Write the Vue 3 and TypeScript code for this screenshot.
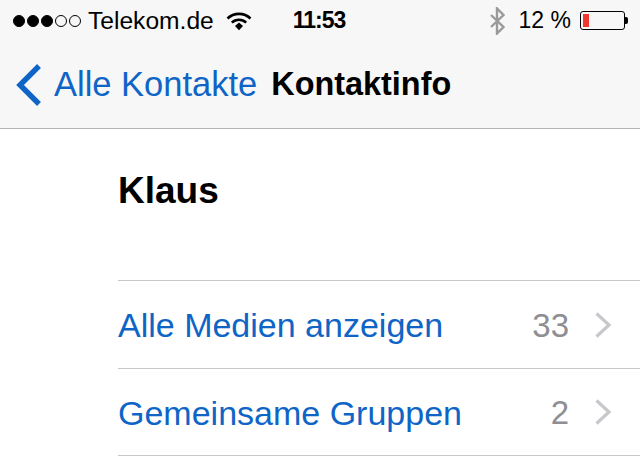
<script setup lang="ts">
interface InfoRow {
  label: string
  count: number
}

const rows: InfoRow[] = [
  { label: 'Alle Medien anzeigen', count: 33 },
  { label: 'Gemeinsame Gruppen', count: 2 }
]
</script>

<template>
  <div class="screen">
    <header class="top">
      <div class="status">
        <div class="status-left">
          <span class="signal">
            <i class="dot on"></i><i class="dot on"></i><i class="dot on"></i><i class="dot"></i><i class="dot"></i>
          </span>
          <span class="carrier">Telekom.de</span>
          <svg class="wifi" width="26" height="20" viewBox="0 0 26 20">
            <path d="M1.5 7.5a16.5 16.5 0 0 1 23 0" fill="none" stroke="#000" stroke-width="2.6" />
            <path d="M5.8 11.6a10.4 10.4 0 0 1 14.4 0" fill="none" stroke="#000" stroke-width="2.6" />
            <path d="M9 15l4-3.4 4 3.4-4 4.2z" fill="#000" />
          </svg>
        </div>
        <span class="time">11:53</span>
        <div class="status-right">
          <svg class="bt" width="18" height="28" viewBox="0 0 18 28">
            <path d="M3 8l12.5 12-6.500 6.500V1.500L15.500 8 3 20" fill="none" stroke="#9a9a9a" stroke-width="2.4" />
          </svg>
          <span class="percent">12 %</span>
          <div class="battery"><div class="charge"></div></div>
          <div class="battery-tip"></div>
        </div>
      </div>
      <nav class="nav">
        <svg class="back" width="28" height="44" viewBox="0 0 28 44">
          <path d="M24 3L5 22l19 19" fill="none" stroke="#0f65c6" stroke-width="5.4" />
        </svg>
        <span class="back-label">Alle Kontakte</span>
        <span class="title">Kontaktinfo</span>
      </nav>
    </header>
    <main class="content">
      <h1 class="name">Klaus</h1>
      <ul class="rows">
        <li v-for="row in rows" :key="row.label" class="row">
          <span class="row-label">{{ row.label }}</span>
          <span class="row-count">{{ row.count }}</span>
          <svg class="chevron" width="18" height="28" viewBox="0 0 18 28">
            <path d="M2.5 2.5L15 14 2.5 25.5" fill="none" stroke="#c7c7cc" stroke-width="3.2" />
          </svg>
        </li>
      </ul>
    </main>
  </div>
</template>

<style scoped>
.screen {
  width: 640px;
  height: 463px;
  overflow: hidden;
  background: #fff;
  font-family: "Liberation Sans", Arial, sans-serif;
  color: #000;
}

.top {
  height: 129px;
  box-sizing: border-box;
  background: #f7f7f7;
  border-bottom: 1px solid #b5b5b5;
}

.status {
  height: 41px;
  display: flex;
  align-items: center;
  font-size: 24.6px;
}

.status-left {
  display: flex;
  align-items: center;
  padding-left: 13px;
}

.signal {
  display: flex;
  gap: 2px;
}

.dot {
  width: 12px;
  height: 12px;
  box-sizing: border-box;
  border-radius: 50%;
  border: 1px solid #000;
}

.dot.on {
  background: #000;
}

.carrier {
  margin-left: 7px;
}

.wifi {
  margin-left: 12px;
}

.time {
  margin-left: 41px;
  font-size: 23px;
  font-weight: 700;
  letter-spacing: -1px;
}

.status-right {
  margin-left: auto;
  display: flex;
  align-items: center;
  padding-right: 12px;
}

.percent {
  margin-left: 13px;
  font-size: 23px;
}

.battery {
  margin-left: 9px;
  width: 45px;
  height: 19px;
  box-sizing: border-box;
  border: 1.5px solid #000;
  border-radius: 3px;
  padding: 2px;
}

.charge {
  width: 6px;
  height: 100%;
  background: #f0382e;
}

.battery-tip {
  width: 3px;
  height: 7px;
  background: #000;
  border-radius: 0 2px 2px 0;
}

.nav {
  height: 87px;
  display: flex;
  align-items: center;
  padding-left: 15px;
  box-sizing: border-box;
}

.back-label {
  margin-left: 11px;
  font-size: 34.5px;
  color: #0f65c6;
}

.title {
  margin-left: 14px;
  font-size: 32.4px;
  font-weight: 700;
}

.name {
  margin: 0;
  height: 151px;
  box-sizing: border-box;
  padding: 40px 0 0 118px;
  font-size: 37px;
  line-height: 44px;
  font-weight: 700;
}

.rows {
  list-style: none;
  margin: 0 0 0 118px;
  padding: 0;
  border-top: 1px solid #c8c8c8;
}

.row {
  height: 88px;
  box-sizing: border-box;
  display: flex;
  align-items: center;
  border-bottom: 1px solid #c8c8c8;
  padding-right: 28px;
  padding-top: 2px;
  font-size: 34px;
}

.row:last-child {
  height: 87px;
}

.row-label {
  flex: 1;
  color: #0f65c6;
}

.row-count {
  color: #8e8e93;
  font-size: 33px;
}

.chevron {
  margin-left: 25px;
  margin-bottom: 2px;
}
</style>
